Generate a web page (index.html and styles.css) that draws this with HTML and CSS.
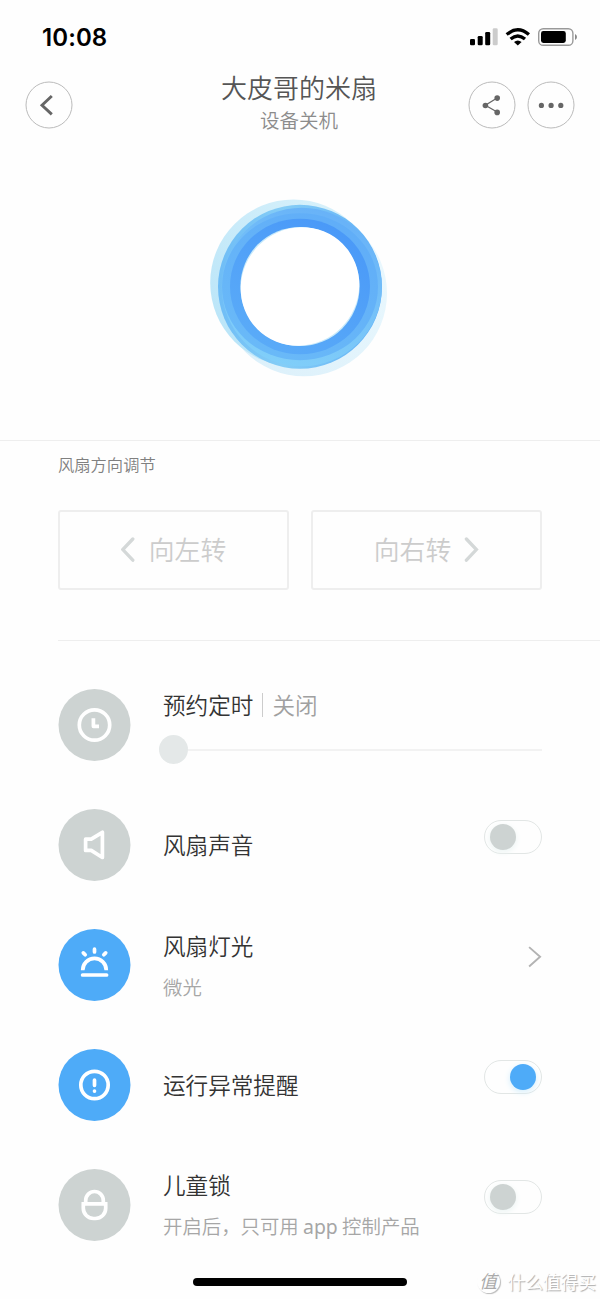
FILE: index.html
```html
<!DOCTYPE html>
<html lang="zh-CN">
<head>
<meta charset="utf-8">
<title>大皮哥的米扇</title>
<link rel="stylesheet" href="styles.css">
</head>
<body>
<div class="screen">
  <div class="status">
    <span class="time">10:08</span>
    <svg class="status-icons" width="110" height="20" viewBox="469 27 110 20">
      <rect x="470" y="39" width="5" height="6.3" rx="1.3"/>
      <rect x="477.7" y="36" width="5" height="9.3" rx="1.3"/>
      <rect x="485.2" y="32" width="5" height="13.3" rx="1.3"/>
      <rect x="492.7" y="28.3" width="5" height="17" rx="1.3" fill="#ccc"/>
      <g fill="none" stroke="#000" stroke-width="3.3">
        <path d="M506.7 34.6Q517.8 24.8 528.9 34.6"/>
        <path d="M510.6 39.1Q517.8 32.9 525 39.1"/>
      </g>
      <path d="M514 42.1Q517.8 38.8 521.6 42.1L517.8 45.6Z"/>
      <rect x="538.7" y="28.7" width="34.2" height="16.6" rx="4.6" fill="none" stroke="#999" stroke-width="1.4"/>
      <rect x="541" y="31" width="24.8" height="12" rx="2.4"/>
      <path d="M575 34Q577 35 577 37T575 40Z" fill="#888"/>
    </svg>
  </div>

  <header class="header">
    <svg class="round" viewBox="0 0 48 48">
      <circle cx="24" cy="24" r="23"/>
      <path class="back" d="M26.8 15L17 24.2L26.8 33.4"/>
    </svg>
    <div class="heading">
      <h1 class="title">大皮哥的米扇</h1>
      <p class="subtitle">设备关机</p>
    </div>
    <div class="actions">
      <svg class="round" viewBox="0 0 48 48">
        <circle cx="24" cy="24" r="23"/>
        <path d="M29.5 16.8L17.4 24.3L29.5 31.2" stroke="#666" stroke-width="1.3"/>
        <g class="dots"><circle cx="29.2" cy="17.1" r="2.8"/><circle cx="17.4" cy="24.5" r="2.8"/><circle cx="29.2" cy="31.4" r="2.8"/></g>
      </svg>
      <svg class="round" viewBox="0 0 48 48">
        <circle cx="24" cy="24" r="23"/>
        <g class="dots"><circle cx="14.4" cy="24.4" r="2.6"/><circle cx="24.1" cy="24.4" r="2.6"/><circle cx="33.8" cy="24.4" r="2.6"/></g>
      </svg>
    </div>
  </header>

  <section class="hero">
    <svg width="200" height="200" viewBox="200 190 200 200">
      <defs>
        <linearGradient id="far" x1="0" y1="1" x2="1" y2="0"><stop offset="0" stop-color="#b5e3f8"/><stop offset="1" stop-color="#ddf3fb"/></linearGradient>
        <linearGradient id="low" x1="0" y1="1" x2="1" y2="0"><stop offset="0" stop-color="#daeffa"/><stop offset="1" stop-color="#ecf9fe"/></linearGradient>
        <linearGradient id="rim" x1="0" y1=".3" x2="1" y2=".3"><stop offset="0" stop-color="#6fbdf6"/><stop offset=".4" stop-color="#85cdf6"/><stop offset="1" stop-color="#60b0f7"/></linearGradient>
        <linearGradient id="outer" x1=".3" y1="1" x2=".7" y2="0"><stop offset="0" stop-color="#81cff9"/><stop offset=".6" stop-color="#73bff8"/><stop offset="1" stop-color="#67b1f8"/></linearGradient>
        <linearGradient id="mid" x1=".2" y1="1" x2=".8" y2="0"><stop offset="0" stop-color="#6abaf8"/><stop offset="1" stop-color="#60adf8"/></linearGradient>
        <linearGradient id="inner" x1=".2" y1="1" x2=".8" y2="0"><stop offset="0" stop-color="#5bacf8"/><stop offset="1" stop-color="#4998f8"/></linearGradient>
      </defs>
      <circle cx="304" cy="293.3" r="83" fill="url(#low)"/>
      <circle cx="293.5" cy="282.8" r="83.3" fill="url(#far)"/>
      <circle cx="300" cy="286.8" r="82" fill="url(#rim)"/>
      <ellipse cx="301.8" cy="287" rx="80" ry="79.3" fill="url(#outer)"/>
      <ellipse cx="300" cy="286.7" rx="78" ry="73.5" fill="url(#mid)"/>
      <ellipse cx="300" cy="286.5" rx="70" ry="67.8" fill="url(#inner)"/>
      <circle cx="300" cy="286.5" r="59.6" fill="#c9eafa"/>
      <ellipse cx="300" cy="286.5" rx="60.3" ry="58.2" fill="#fff" transform="rotate(-45 300 286.5)"/>
    </svg>
  </section>

  <section class="direction">
    <h2 class="label">风扇方向调节</h2>
    <div class="buttons">
      <div class="turn">
        <svg width="15" height="26" viewBox="0 0 15 26"><path d="M11.8 2L1.8 12.6L11.8 23.2"/></svg>
        <span>向左转</span>
      </div>
      <div class="turn">
        <span>向右转</span>
        <svg width="15" height="26" viewBox="0 0 15 26"><path d="M2.4 2L12.4 12.6L2.4 23.2"/></svg>
      </div>
    </div>
  </section>

  <main class="list">
    <div class="row">
      <svg class="icon" viewBox="0 0 73 72"><circle cx="36.5" cy="36" r="36"/><path d="M21.3 36a15.2 15.2 0 1 0 30.4 0a15.2 15.2 0 1 0 -30.4 0M35.4 29.3V37.3H41"/></svg>
      <div class="text timer">
        <div class="name">预约定时<span class="state">关闭</span></div>
        <div class="slider"><span class="thumb"></span></div>
      </div>
    </div>
    <div class="row">
      <svg class="icon" viewBox="0 0 73 72"><circle cx="36.5" cy="36" r="36"/><path d="M27.6 30.2H33.2L44.4 23.3V48.5L33.2 41.4H27.6Z"/></svg>
      <div class="text"><div class="name">风扇声音</div></div>
      <div class="toggle"><span class="knob"></span></div>
    </div>
    <div class="row">
      <svg class="icon active" viewBox="0 0 73 72"><circle cx="36.5" cy="36" r="36"/><path d="M24.7 41.2A11.8 11.8 0 0 1 48.3 41.2"/><path d="M24.6 46H48.6M36.5 20.2V23M25.3 23.9L27.2 25.8M47.7 23.9L45.8 25.8" stroke-linecap="round"/></svg>
      <div class="text"><div class="name">风扇灯光</div><div class="note">微光</div></div>
      <svg class="chevron" width="14" height="22" viewBox="0 0 14 22"><path d="M1.1 1.1L12.1 10.8L1.1 20.5"/></svg>
    </div>
    <div class="row">
      <svg class="icon active" viewBox="0 0 73 72"><circle cx="36.5" cy="36" r="36"/><path d="M22.8 36a13.7 13.7 0 1 0 27.4 0a13.7 13.7 0 1 0 -27.4 0"/><path d="M36.5 31V36.3M36.5 42V42.1" stroke-linecap="round" stroke-width="3.1"/></svg>
      <div class="text"><div class="name">运行异常提醒</div></div>
      <div class="toggle on"><span class="knob"></span></div>
    </div>
    <div class="row">
      <svg class="icon" viewBox="0 0 73 72"><circle cx="36.5" cy="36" r="36"/><path d="M27.7 34V31.5A8.8 9 0 0 1 45.3 31.5V34M23.5 34.8H49.5M25.3 34.8V39.2A10.3 10.3 0 0 0 35.6 49.5H37.4A10.3 10.3 0 0 0 47.7 39.2V34.8"/></svg>
      <div class="text"><div class="name">儿童锁</div><div class="note">开启后，只可用 <span class="latin">app</span> 控制产品</div></div>
      <div class="toggle"><span class="knob"></span></div>
    </div>
  </main>

  <footer class="footer">
    <div class="home"></div>
    <div class="watermark"><span class="seal">值</span><span>什么值得买</span></div>
  </footer>
</div>
</body>
</html>
```
FILE: styles.css
```css
* { box-sizing: border-box; }

body {
  margin: 0;
  background: #fefefe;
  font-family: "Noto Sans CJK SC", sans-serif;
  font-weight: 350;
}

h1, h2, p { margin: 0; font-weight: inherit; }
svg { display: block; flex: none; }

.screen {
  width: 600px;
  height: 1299px;
  display: flex;
  flex-direction: column;
  overflow: hidden;
}

.status {
  height: 74px;
  padding: 1px 21px 0 42px;
  display: flex;
  justify-content: space-between;
  align-items: center;
}
.status-icons { margin-top: -1px; }
.time { font: 600 24px/30px Inter, sans-serif; letter-spacing: 0.1px; }

.header {
  height: 66px;
  padding: 7px 25px 0;
  display: grid;
  grid-template-columns: 107px 1fr 107px;
  align-items: start;
}
.round { width: 48px; height: 48px; fill: none; }
.round > circle { stroke: #bbb; stroke-width: 1; }
.round .back { stroke: #666; stroke-width: 2.9; }
.dots { fill: #666; }
.heading { text-align: center; margin: -9px 2px 0 0; }
.title { font-size: 26px; line-height: 30px; color: #555; }
.subtitle { font-size: 19.5px; line-height: 35px; color: #8c8c8c; }
.actions { display: flex; gap: 11px; }

.hero {
  height: 301px;
  padding-top: 50px;
  display: flex;
  justify-content: center;
  border-bottom: 1px solid #eee;
}

.direction {
  height: 200px;
  margin-left: 58px;
  padding-right: 58px;
  border-bottom: 1px solid #eee;
}
.label { font-size: 16.3px; line-height: 48px; color: #808080; margin-top: -1px; }
.buttons { display: flex; gap: 22px; margin-top: 22px; }
.turn {
  width: 231px;
  height: 80px;
  display: flex;
  align-items: center;
  justify-content: center;
  gap: 13px;
  border: 2px solid #eee;
  border-radius: 3px;
  font-size: 25.8px;
  line-height: 36px;
  color: #ccc;
}
.turn span { margin-top: -2px; }
.turn path { fill: none; stroke: #d4d8d8; stroke-width: 3.3; stroke-linecap: round; }

.list { padding: 24px 58px 0; }
.row { height: 120px; display: flex; align-items: center; }
.icon {
  width: 73px;
  height: 72px;
  margin-right: 32px;
  fill: none;
  stroke-linejoin: round;
}
.icon circle { fill: #cdd3d2; }
.icon.active circle { fill: #4eabf8; }
.icon path { stroke: #fff; stroke-width: 3.7; }
.text { flex: 1; white-space: nowrap; }
.name { font-size: 22.6px; line-height: 40px; color: #333; }
.name:not(:only-child) { position: relative; top: 2px; }
.note { font-size: 19.4px; line-height: 46px; margin-bottom: -3px; color: #a6a6a6; }
.latin { font-family: "Noto Sans", sans-serif; font-weight: 400; }

.timer { height: 84px; }
.state {
  margin-left: 9px;
  padding-left: 9px;
  border-left: 1px solid #ccc;
  color: #a0a0a0;
  line-height: 24px;
  display: inline-block;
}
.slider {
  height: 30px;
  margin: 11px 0 0 -4px;
  display: flex;
  align-items: center;
}
.slider::after { content: ""; flex: 1; height: 2px; margin-top: 2px; background: #f2f2f2; }
.thumb { width: 29px; height: 29px; border-radius: 50%; background: #e4e8e8; }

.toggle {
  width: 58px;
  height: 34px;
  padding: 0 5px;
  margin-bottom: 16px;
  display: flex;
  align-items: center;
  border: 1px solid #e2e6e5;
  border-radius: 17px;
}
.knob {
  width: 26px;
  height: 26px;
  border-radius: 50%;
  background: #cdd3d2;
  box-shadow: 0 2px 6px #ebf4f3;
}
.toggle.on { justify-content: flex-end; }
.toggle.on .knob { background: #4eabf8; box-shadow: 0 2px 6px #d3eefc; }
.chevron { margin-bottom: 16px; }
.chevron path { fill: none; stroke: #b3b3b3; stroke-width: 1.9; }

.footer {
  flex: 1;
  display: grid;
  grid-template-columns: 193px 214px 1fr;
  padding-top: 2px;
}
.home { grid-column: 2; height: 8px; margin-top: 11px; border-radius: 4px; background: #000; }
.watermark {
  padding-right: 4px;
  margin-top: -1px;
  display: flex;
  justify-content: flex-end;
  align-items: center;
  align-self: start;
  gap: 8px;
  height: 30px;
  font-size: 17.7px;
  line-height: 24px;
  font-weight: 400;
  color: #fff;
  text-shadow: 1px 1px 1px #aaa;
  white-space: nowrap;
}
.seal {
  width: 23px;
  height: 23px;
  border-radius: 50%;
  box-shadow: 1px 1px 1px #bbb;
  text-align: center;
  line-height: 21px;
  color: #aaa;
  text-shadow: none;
  font-style: italic;
}
```
